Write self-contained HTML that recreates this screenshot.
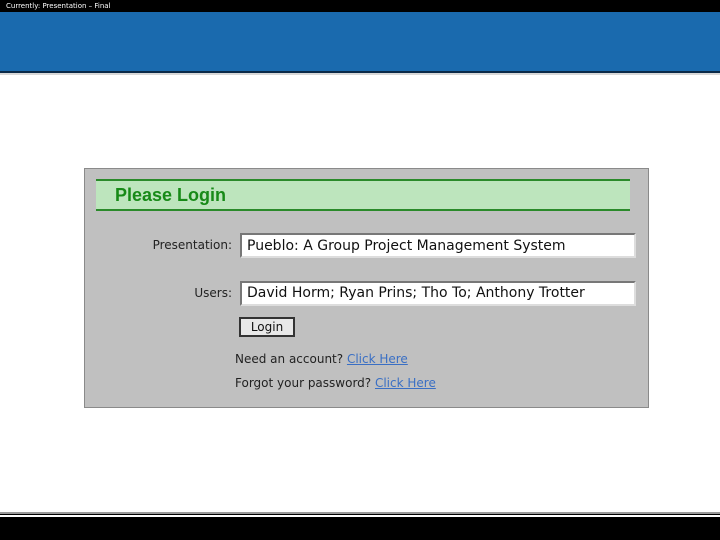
<!DOCTYPE html>
<html><head><style>
body{margin:0;width:720px;height:540px;position:relative;background:#fff;font-family:"DejaVu Sans","Liberation Sans",sans-serif;overflow:hidden}
.a{position:absolute}
</style></head><body>
<div class="a" style="left:0;top:0;width:720px;height:12px;background:#000"></div>
<div class="a" style="left:6px;top:1px;color:#fff;font-size:7px;line-height:10px">Currently: Presentation – Final</div>
<div class="a" style="left:0;top:12px;width:720px;height:59px;background:#1a6aae"></div>
<div class="a" style="left:0;top:71px;width:720px;height:2px;background:#0b2a48"></div>
<div class="a" style="left:0;top:73px;width:720px;height:2px;background:#d8d8d8"></div>
<div class="a" style="left:84px;top:168px;width:563px;height:238px;background:#c0c0c0;border:1px solid #8a8a8a"></div>
<div class="a" style="left:96px;top:179px;width:534px;height:28px;background:#bde5bd;border-top:2px solid #2a8a2a;border-bottom:2px solid #2a8a2a"></div>
<div class="a" style="left:115px;top:185px;font-family:'Liberation Sans',sans-serif;font-weight:bold;font-size:18px;color:#178a17">Please Login</div>
<div class="a" style="left:100px;top:238px;width:132px;text-align:right;font-size:12px;color:#222">Presentation:</div>
<div class="a" style="left:100px;top:286px;width:132px;text-align:right;font-size:12px;color:#222">Users:</div>
<div class="a" style="left:240px;top:233px;width:392px;height:21px;background:#fff;border:2px solid #777;border-right-color:#ddd;border-bottom-color:#ddd"></div>
<div class="a" style="left:247px;top:238px;font-size:14px;color:#111">Pueblo: A Group Project Management System</div>
<div class="a" style="left:240px;top:281px;width:392px;height:21px;background:#fff;border:2px solid #777;border-right-color:#ddd;border-bottom-color:#ddd"></div>
<div class="a" style="left:247px;top:285px;font-size:14px;color:#111">David Horm; Ryan Prins; Tho To; Anthony Trotter</div>
<div class="a" style="left:239px;top:317px;width:52px;height:16px;background:#e8e8e8;border:2px solid #333"></div>
<div class="a" style="left:239px;top:320px;width:56px;text-align:center;font-size:12px;color:#111">Login</div>
<div class="a" style="left:235px;top:352px;font-size:12px;color:#222">Need an account? <span style="color:#3a6fc4;text-decoration:underline">Click Here</span></div>
<div class="a" style="left:235px;top:376px;font-size:12px;color:#222">Forgot your password? <span style="color:#3a6fc4;text-decoration:underline">Click Here</span></div>
<div class="a" style="left:0;top:512px;width:720px;height:2px;background:#999"></div>
<div class="a" style="left:0;top:514px;width:720px;height:1px;background:#000"></div>
<div class="a" style="left:0;top:517px;width:720px;height:23px;background:#000"></div>
</body></html>
